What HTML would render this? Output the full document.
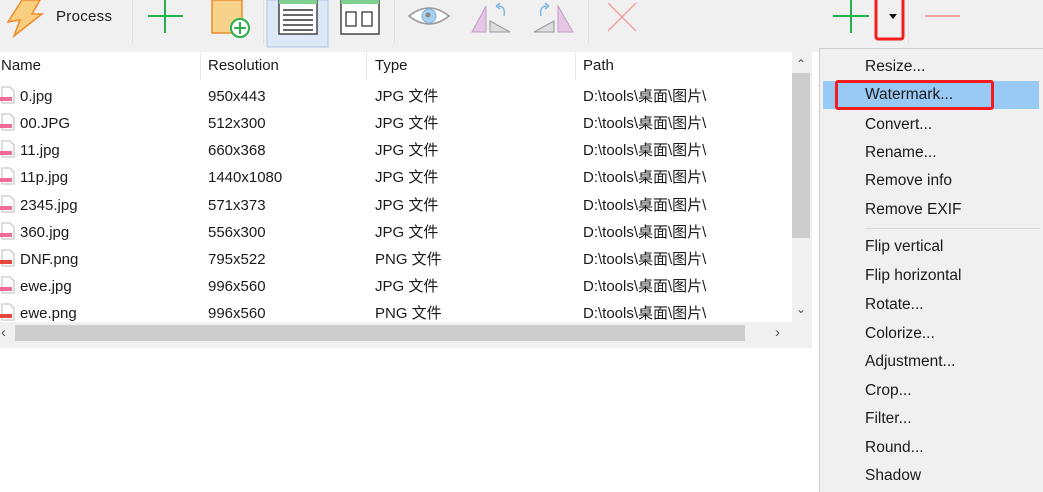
<!DOCTYPE html>
<html><head><meta charset="utf-8"><style>
*{margin:0;padding:0;box-sizing:border-box}
body{width:1043px;height:492px;overflow:hidden;background:#fff;font-family:"Liberation Sans","Noto Sans CJK SC",sans-serif;font-size:15px;color:#1a1a1a;position:relative}
.a{position:absolute}
.tb{left:0;top:0;width:1043px;height:49px;background:#f0f0f0}
.sep{position:absolute;top:0;width:1px;height:44px;background:#e0e0e0}
.t{position:absolute;white-space:nowrap;line-height:18px}
.hdiv{position:absolute;top:52px;width:1px;height:28px;background:#e5e5e5}
.menu{left:819px;top:48px;width:224px;height:444px;background:#f0f0f0;border:1px solid #ccc;border-right:none;border-bottom:none}
.mi{position:absolute;left:45px;white-space:nowrap;line-height:18px;font-size:15.5px}
</style></head><body>
<div class="a tb"></div>
<svg class="a" style="left:0;top:0" width="1043" height="49">
<path d="M22 0 L40 0 L32 14 L42 14 L14 36 L20 20 L8 22 Z" fill="#f8cf7e" stroke="#ef8a2b" stroke-width="1.5"/>
<line x1="148" y1="16" x2="183" y2="16" stroke="#28b04a" stroke-width="2"/>
<line x1="165" y1="0" x2="165" y2="33" stroke="#28b04a" stroke-width="2"/>
<path d="M212 0 L242 0 L242 33 L212 33 Z" fill="#f7d28a" stroke="#ec8b2c" stroke-width="1.5"/>
<circle cx="240" cy="28" r="9" fill="#fff" stroke="#28b04a" stroke-width="2"/>
<line x1="234" y1="28" x2="246" y2="28" stroke="#28b04a" stroke-width="2"/><line x1="240" y1="22" x2="240" y2="34" stroke="#28b04a" stroke-width="2"/>
<rect x="267" y="0" width="61" height="47" fill="#dce8f5" stroke="#aac9ea"/>
<rect x="279" y="0" width="38" height="34" fill="#fff" stroke="#444" stroke-width="1.5"/><rect x="279" y="0" width="38" height="4" fill="#7fcf8f"/>
<g stroke="#333" stroke-width="1.5"><line x1="283" y1="10" x2="313" y2="10"/><line x1="283" y1="15" x2="313" y2="15"/><line x1="283" y1="20" x2="313" y2="20"/><line x1="283" y1="25" x2="313" y2="25"/><line x1="283" y1="30" x2="313" y2="30"/></g>
<rect x="341" y="0" width="38" height="34" fill="#fff" stroke="#444" stroke-width="1.5"/><rect x="341" y="0" width="38" height="4" fill="#7fcf8f"/>
<path d="M346 12 h10 v14 h-10z M362 12 h10 v14 h-10z" fill="none" stroke="#333" stroke-width="1.3"/>
<path d="M409 16 Q429 0 449 16 Q429 32 409 16Z" fill="#fff" stroke="#999" stroke-width="1.5"/><circle cx="429" cy="16" r="7" fill="#a9d0ef" stroke="#7ab0df"/><circle cx="428" cy="15" r="2.5" fill="#888"/>
<path d="M486 6 L486 32 L472 32Z" fill="#e6c6e6" stroke="#c79ac7"/><path d="M490 21 L490 32 L510 32Z" fill="#ddd" stroke="#999"/>
<path d="M504 16 Q506 6 498 6 M496 6 l4 -3 M496 6 l4 3" fill="none" stroke="#80b8e6" stroke-width="1.5"/>
<path d="M558 6 L558 32 L573 32Z" fill="#e6c6e6" stroke="#c79ac7"/><path d="M554 21 L554 32 L534 32Z" fill="#ddd" stroke="#999"/>
<path d="M541 16 Q539 6 547 6 M549 6 l-4 -3 M549 6 l-4 3" fill="none" stroke="#80b8e6" stroke-width="1.5"/>
<path d="M608 3 L636 31 M636 3 L608 31" stroke="#f2a0a0" stroke-width="1.5"/>
<line x1="833" y1="16" x2="869" y2="16" stroke="#28b04a" stroke-width="2"/><line x1="851" y1="0" x2="851" y2="33" stroke="#28b04a" stroke-width="2"/>
<rect x="876" y="-3" width="27" height="42" rx="2" fill="none" stroke="#f21d1d" stroke-width="3"/>
<path d="M889 14 h8 l-4 5z" fill="#111"/>
<line x1="925" y1="16" x2="960" y2="16" stroke="#f2a0a0" stroke-width="2"/>
</svg>
<div class="sep" style="left:132px"></div><div class="sep" style="left:263px"></div><div class="sep" style="left:394px"></div><div class="sep" style="left:588px"></div><div class="sep" style="left:908px"></div>
<div class="t" style="left:56px;top:8px;letter-spacing:0.3px">Process</div>
<div class="a" style="left:0;top:49px;width:819px;height:3px;background:#f0f0f0"></div>
<div class="hdiv" style="left:200px"></div><div class="hdiv" style="left:366px"></div><div class="hdiv" style="left:575px"></div>
<div class="t" style="left:1px;top:57px">Name</div><div class="t" style="left:208px;top:57px">Resolution</div><div class="t" style="left:375px;top:57px">Type</div><div class="t" style="left:583px;top:57px">Path</div>
<div class="a" style="left:792px;top:52px;width:20px;height:270px;background:#f0f0f0"></div>
<div class="a" style="left:792px;top:73px;width:18px;height:165px;background:#cdcdcd"></div>
<div class="t" style="left:796px;top:55px;font-size:12px;color:#555">&#8963;</div>
<div class="t" style="left:796px;top:300px;font-size:12px;color:#555">&#8964;</div>
<div class="a" style="left:0;top:322px;width:812px;height:26px;background:#f0f0f0"></div>
<div class="a" style="left:15px;top:325px;width:730px;height:16px;background:#cdcdcd"></div>
<div class="t" style="left:1px;top:324px;color:#555">&#8249;</div><div class="t" style="left:775px;top:324px;color:#555">&#8250;</div>
<div class="a" style="left:0;top:81px;width:792px;height:241px;overflow:hidden">
<div class="t" style="left:20px;top:7px">0.jpg</div><div class="t" style="left:208px;top:7px">950x443</div><div class="t" style="left:375px;top:7px">JPG 文件</div><div class="t" style="left:583px;top:7px">D:\tools\桌面\图片\</div>
<div class="t" style="left:20px;top:34px">00.JPG</div><div class="t" style="left:208px;top:34px">512x300</div><div class="t" style="left:375px;top:34px">JPG 文件</div><div class="t" style="left:583px;top:34px">D:\tools\桌面\图片\</div>
<div class="t" style="left:20px;top:61px">11.jpg</div><div class="t" style="left:208px;top:61px">660x368</div><div class="t" style="left:375px;top:61px">JPG 文件</div><div class="t" style="left:583px;top:61px">D:\tools\桌面\图片\</div>
<div class="t" style="left:20px;top:88px">11p.jpg</div><div class="t" style="left:208px;top:88px">1440x1080</div><div class="t" style="left:375px;top:88px">JPG 文件</div><div class="t" style="left:583px;top:88px">D:\tools\桌面\图片\</div>
<div class="t" style="left:20px;top:116px">2345.jpg</div><div class="t" style="left:208px;top:116px">571x373</div><div class="t" style="left:375px;top:116px">JPG 文件</div><div class="t" style="left:583px;top:116px">D:\tools\桌面\图片\</div>
<div class="t" style="left:20px;top:143px">360.jpg</div><div class="t" style="left:208px;top:143px">556x300</div><div class="t" style="left:375px;top:143px">JPG 文件</div><div class="t" style="left:583px;top:143px">D:\tools\桌面\图片\</div>
<div class="t" style="left:20px;top:170px">DNF.png</div><div class="t" style="left:208px;top:170px">795x522</div><div class="t" style="left:375px;top:170px">PNG 文件</div><div class="t" style="left:583px;top:170px">D:\tools\桌面\图片\</div>
<div class="t" style="left:20px;top:197px">ewe.jpg</div><div class="t" style="left:208px;top:197px">996x560</div><div class="t" style="left:375px;top:197px">JPG 文件</div><div class="t" style="left:583px;top:197px">D:\tools\桌面\图片\</div>
<div class="t" style="left:20px;top:224px">ewe.png</div><div class="t" style="left:208px;top:224px">996x560</div><div class="t" style="left:375px;top:224px">PNG 文件</div><div class="t" style="left:583px;top:224px">D:\tools\桌面\图片\</div>
<svg class="a" style="left:0;top:0" width="20" height="242">
<g fill="#fff" stroke="#bbb"><path d="M2 6h8l4 4v12H2z"/><path d="M2 33h8l4 4v12H2z"/><path d="M2 60h8l4 4v12H2z"/><path d="M2 87h8l4 4v12H2z"/><path d="M2 115h8l4 4v12H2z"/><path d="M2 142h8l4 4v12H2z"/><path d="M2 169h8l4 4v12H2z"/><path d="M2 196h8l4 4v12H2z"/><path d="M2 223h8l4 4v12H2z"/></g>
<g fill="#f06a9a"><rect x="0" y="16" width="12" height="4"/><rect x="0" y="43" width="12" height="4"/><rect x="0" y="70" width="12" height="4"/><rect x="0" y="97" width="12" height="4"/><rect x="0" y="125" width="12" height="4"/><rect x="0" y="152" width="12" height="4"/><rect x="0" y="179" width="12" height="4" fill="#e8453c"/><rect x="0" y="206" width="12" height="4"/><rect x="0" y="233" width="12" height="4" fill="#e8453c"/></g>
</svg>
</div>
<div class="a menu">
<div class="a" style="left:3px;top:32px;width:216px;height:28px;background:#99c9f5"></div>
<div class="a" style="left:15px;top:31px;width:159px;height:30px;border:3px solid #f21d1d;border-radius:3px"></div>
<div class="a" style="left:45px;top:179px;width:175px;height:1px;background:#d8d8d8"></div>
<div class="mi" style="top:9px">Resize...</div>
<div class="mi" style="top:37px">Watermark...</div>
<div class="mi" style="top:67px">Convert...</div>
<div class="mi" style="top:95px">Rename...</div>
<div class="mi" style="top:123px">Remove info</div>
<div class="mi" style="top:152px">Remove EXIF</div>
<div class="mi" style="top:189px">Flip vertical</div>
<div class="mi" style="top:218px">Flip horizontal</div>
<div class="mi" style="top:247px">Rotate...</div>
<div class="mi" style="top:276px">Colorize...</div>
<div class="mi" style="top:304px">Adjustment...</div>
<div class="mi" style="top:333px">Crop...</div>
<div class="mi" style="top:361px">Filter...</div>
<div class="mi" style="top:390px">Round...</div>
<div class="mi" style="top:418px">Shadow</div>
</div>
</body></html>
